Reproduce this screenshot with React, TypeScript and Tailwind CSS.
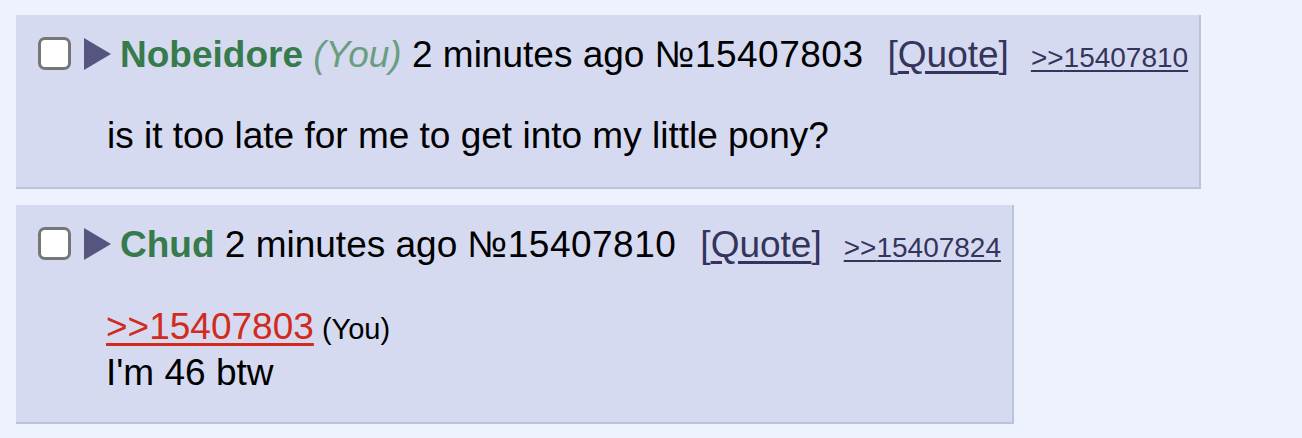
import React from 'react';

type Post = {
    id: number;
    name: string;
    you?: boolean;
    time: string;
    backlink: string;
};

function PostHeader({ post }: { post: Post }) {
    return (
        <div className="flex items-center h-[43px] leading-[43px] whitespace-nowrap">
            <input
                type="checkbox"
                className="appearance-none w-[33px] h-[33px] border-[3px] border-[#767676] rounded-[7px] bg-white mb-[4px] shrink-0"
            />
            <svg width="27" height="32" viewBox="0 0 27 32" className="ml-[13px] mb-[4px] shrink-0">
                <polygon points="0,0 27,16 0,32" fill="#565580" />
            </svg>
            <span className="ml-[9px]">
                <span className="font-bold text-[#377a4b]">{post.name}</span>
                {post.you && <span className="italic text-[#6b9e80]"> (You)</span>}
                <span> {post.time} <span className="tracking-[0.5px]">№{post.id}</span></span>
                <span className="ml-[24px] text-[#34345c]">
                    [<span className="underline underline-offset-[4px]">Quote</span>]
                </span>
                <span className="ml-[22px] text-[28px] text-[#34345c] underline underline-offset-[3px]">
                    &gt;&gt;{post.backlink}
                </span>
            </span>
        </div>
    );
}

export default function App() {
    const first: Post = { id: 15407803, name: 'Nobeidore', you: true, time: '2 minutes ago', backlink: '15407810' };
    const second: Post = { id: 15407810, name: 'Chud', time: '2 minutes ago', backlink: '15407824' };

    return (
        <div
            className="min-h-[438px] bg-[#eef2ff] pl-[16px] pt-[15px] flex flex-col items-start gap-[16px] text-black text-[37px]"
            style={{ fontFamily: '"Liberation Sans", Arial, Helvetica, sans-serif' }}
        >
            <div className="bg-[#d6daf0] border-r-2 border-b-2 border-[#b7c5d9] pl-[22px] pr-[11px] pt-[19px] pb-[30px]">
                <PostHeader post={first} />
                <div className="ml-[69px] mt-[37px] leading-[43px]">
                    is it too late for me to get into my little pony?
                </div>
            </div>

            <div className="bg-[#d6daf0] border-r-2 border-b-2 border-[#b7c5d9] pl-[22px] pr-[11px] pt-[19px] pb-[28px]">
                <PostHeader post={second} />
                <div className="ml-[68px] mt-[38px] leading-[43px]">
                    <div>
                        <span className="text-[#d22a1c] underline underline-offset-[4px]">&gt;&gt;15407803</span>
                        <span className="text-[29px]"> (You)</span>
                    </div>
                    <div>I'm 46 btw</div>
                </div>
            </div>
        </div>
    );
}
